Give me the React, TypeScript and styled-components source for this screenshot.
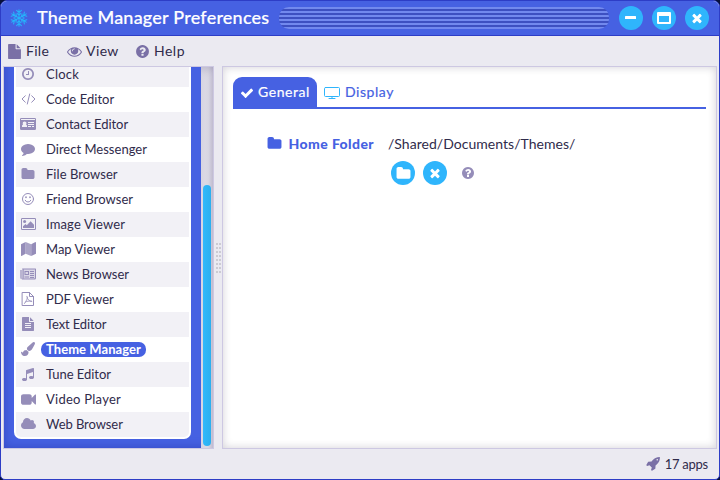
import React from 'react';
import styled, { createGlobalStyle, css } from 'styled-components';

const GlobalStyle = createGlobalStyle`
  * { box-sizing: border-box; }
  html, body { margin: 0; background: #07103a; }
  body { font-family: Lato, "Liberation Sans", sans-serif; color: #302b4b; overflow: hidden; }
`;

/* ---------- layout ---------- */

const Window = styled.div`
  display: flex;
  flex-direction: column;
  width: 720px;
  height: 480px;
  border: 1px solid #2d3dc6;
  border-radius: 7px 7px 5px 5px;
  background: #ebeaf1;
  overflow: hidden;
`;

const TitleBar = styled.header`
  display: flex;
  align-items: center;
  height: 35px;
  flex: none;
  padding: 0 10px 0 8px;
  background: #4661e2;
  border-bottom: 1px solid #2d3dc6;
  color: #fff;
`;

const Title = styled.h1<{ $spacing: number }>`
  margin: 0 9px 0 8px;
  width: 233px;
  flex: none;
  height: 34px;
  font-size: 18px;
  font-weight: 500;
  line-height: 32px;
  letter-spacing: ${(p) => p.$spacing}px;
  white-space: nowrap;
  -webkit-text-stroke: 0.2px #fff;
`;

const Grip = styled.div`
  flex: 1;
  height: 22px;
  border-radius: 10px;
  background: repeating-linear-gradient(#7289ee 0 2px, #3d50c1 2px 4px);
`;

const WindowButtons = styled.div`
  display: flex;
  gap: 9px;
  margin-left: 10px;
`;

const RoundButton = styled.button`
  display: flex;
  align-items: center;
  justify-content: center;
  width: 24px;
  height: 24px;
  padding: 0;
  border: 0;
  border-radius: 50%;
  background: #2fb5fc;
  color: #fff;
`;

const MenuBar = styled.nav`
  display: flex;
  height: 30px;
  flex: none;
  padding: 0 0 0 6px;
`;

const MenuItem = styled.div<{ $width: number; $spacing: number }>`
  display: flex;
  align-items: center;
  gap: 4px;
  width: ${(p) => p.$width}px;
  font-size: 14px;
  letter-spacing: ${(p) => p.$spacing}px;
  line-height: 30px;
  svg { color: #7a70a6; }
`;

const Body = styled.div`
  display: flex;
  height: 383px;
  flex: none;
  margin: 0 2px;
`;

const SidePanel = styled.aside`
  display: flex;
  width: 211px;
  flex: none;
  border: 1px solid #cdc8e2;
`;

const ListWell = styled.div`
  display: flex;
  flex-direction: column;
  justify-content: flex-end;
  width: 197px;
  flex: none;
  padding: 0 10px 9px;
  background: #4661e2;
  box-shadow: inset 5px -5px 9px -4px rgba(30, 40, 150, 0.35);
  overflow: hidden;
`;

const AppList = styled.ul`
  display: flex;
  flex-direction: column;
  flex: none;
  margin: 0;
  padding: 0 2px 2px;
  list-style: none;
  background: #fff;
  border-radius: 0 0 7px 7px;
`;

const AppRow = styled.li<{ $shaded: boolean }>`
  display: flex;
  align-items: center;
  height: 25px;
  background: ${(p) => (p.$shaded ? '#f2f1f6' : '#fff')};
  &:last-child { border-radius: 0 0 5px 5px; }
`;

const AppIcon = styled.span`
  display: flex;
  justify-content: center;
  width: 25px;
  padding: 0 1px 1px 0;
  color: #958db9;
`;

const AppName = styled.span<{ $selected?: boolean; $spacing: number }>`
  height: 15px;
  padding: 0 5px;
  border-radius: 7px;
  font-size: 13px;
  line-height: 15px;
  letter-spacing: ${(p) => p.$spacing}px;
  white-space: nowrap;
  ${(p) => p.$selected && css`
    background: #4661e2;
    color: #fff;
    font-weight: 700;
  `}
`;

const ScrollTrack = styled.div`
  display: flex;
  flex: 1;
  align-items: flex-end;
  justify-content: center;
  padding: 0 0 2px;
  background: linear-gradient(90deg, #dedce7, #d8d6e2 60%, #c5c1d5);
  box-shadow: inset 0 6px 8px -4px rgba(50, 40, 90, 0.2);
`;

const ScrollThumb = styled.div`
  width: 8px;
  height: 261px;
  border-radius: 4px;
  background: linear-gradient(90deg, #30b9fb, #2bafef);
`;

const Splitter = styled.div`
  display: flex;
  align-items: center;
  justify-content: center;
  width: 8px;
  flex: none;
`;

const SplitterDots = styled.div`
  display: grid;
  grid-template-columns: 2px 2px;
  gap: 2px 1px;
`;

const Dot = styled.i`
  width: 2px;
  height: 2px;
  background: #cccbd3;
`;

const Content = styled.main`
  flex: 1;
  padding: 10px 10px 0 10px;
  border: 1px solid #cdc8e2;
  background: #fff;
  box-shadow: inset 0 0 9px rgba(20, 10, 40, 0.19);
`;

const Tabs = styled.div`
  display: flex;
  height: 32px;
  border-bottom: 2px solid #4661e2;
`;

const Tab = styled.div<{ $active?: boolean; $spacing: number }>`
  display: flex;
  align-items: center;
  gap: ${(p) => (p.$active ? 4 : 5)}px;
  height: 30px;
  padding: 0 7px 1px;
  border-radius: 9px 9px 0 0;
  font-size: 14px;
  letter-spacing: ${(p) => p.$spacing}px;
  background: ${(p) => (p.$active ? '#4661e2' : 'transparent')};
  color: ${(p) => (p.$active ? '#fff' : '#4661e2')};
  width: ${(p) => (p.$active ? '84px' : 'auto')};
  -webkit-text-stroke: 0.2px currentColor;
  svg { margin-top: 2px; }
`;

const Form = styled.div`
  display: grid;
  grid-template-columns: 141px 1fr;
  column-gap: 14px;
  padding: 26px 0 0;
`;

const FieldLabel = styled.div`
  display: flex;
  align-items: center;
  justify-content: flex-end;
  gap: 7px;
  height: 17px;
  color: #4661e2;
  font-size: 14px;
  font-weight: 900;
  letter-spacing: 0.4px;
  white-space: nowrap;
`;

const FieldValue = styled.div`
  height: 17px;
  font-size: 14px;
  letter-spacing: 0.03px;
  line-height: 17px;
`;

const FieldActions = styled.div`
  display: flex;
  grid-column: 2;
  align-items: center;
  gap: 8px;
  margin: 9px 0 0 3px;
  color: #958db9;
`;

const HelpMark = styled.span`
  display: flex;
  margin-left: 6px;
`;

const StatusBar = styled.footer`
  display: flex;
  flex: 1;
  align-items: center;
  justify-content: flex-end;
  gap: 4px;
  padding: 0 11px 1px 0;
  font-size: 13px;
  letter-spacing: -0.25px;
  svg { color: #7a70a6; }
`;

/* ---------- icons ---------- */

const Svg = styled.svg`
  display: block;
  flex: none;
  fill: currentColor;
`;

const paths = {
  folder: 'M1728 608v704q0 92-66 158t-158 66h-1216q-92 0-158-66t-66-158v-960q0-92 66-158t158-66h320q92 0 158 66t66 158v32h672q92 0 158 66t66 158z',
  help: 'M1024 1376v-192q0-14-9-23t-23-9h-192q-14 0-23 9t-9 23v192q0 14 9 23t23 9h192q14 0 23-9t9-23zm256-672q0-88-55.5-163t-138.5-116-170-41q-243 0-371 213-15 24 8 42l132 100q7 6 19 6 16 0 25-12 53-68 86-92 34-24 86-24 48 0 85.5 26t37.5 59q0 38-20 61t-68 45q-63 28-115.5 86.5t-52.5 125.5v36q0 14 9 23t23 9h192q14 0 23-9t9-23q0-19 21.5-49.5t54.5-49.5q32-18 49-28.5t46-35 44.5-48 28-60.5 12.5-81zm384 192q0 209-103 385.5t-279.5 279.5-385.5 103-385.5-103-279.5-279.5-103-385.5 103-385.5 279.5-279.5 385.5-103 385.5 103 279.5 279.5 103 385.5z',
  clock: 'M1024 544v448q0 14-9 23t-23 9h-320q-14 0-23-9t-9-23v-64q0-14 9-23t23-9h224v-352q0-14 9-23t23-9h64q14 0 23 9t9 23zm416 352q0-148-73-273t-198-198-273-73-273 73-198 198-73 273 73 273 198 198 273 73 273-73 198-198 73-273zm224 0q0 209-103 385.5t-279.5 279.5-385.5 103-385.5-103-279.5-279.5-103-385.5 103-385.5 279.5-279.5 385.5-103 385.5 103 279.5 279.5 103 385.5z',
  file: 'M1152 512v-472q22 14 36 28l408 408q14 14 28 36h-472zm-128 32q0 40 28 68t68 28h544v1056q0 40-28 68t-68 28h-1344q-40 0-68-28t-28-68v-1600q0-40 28-68t68-28h800v544z',
  text: 'M1596 476q14 14 28 36h-472v-472q22 14 36 28zm-476 164h544v1056q0 40-28 68t-68 28h-1344q-40 0-68-28t-28-68v-1600q0-40 28-68t68-28h800v544q0 40 28 68t68 28zm160 736v-64q0-14-9-23t-23-9h-704q-14 0-23 9t-9 23v64q0 14 9 23t23 9h704q14 0 23-9t9-23zm0-256v-64q0-14-9-23t-23-9h-704q-14 0-23 9t-9 23v64q0 14 9 23t23 9h704q14 0 23-9t9-23zm0-256v-64q0-14-9-23t-23-9h-704q-14 0-23 9t-9 23v64q0 14 9 23t23 9h704q14 0 23-9t9-23z',
  eye: 'M1664 960q-152-236-381-353 61 104 61 225 0 185-131.5 316.5t-316.5 131.5-316.5-131.5-131.5-316.5q0-121 61-225-229 117-381 353 133 205 333.5 326.5t434.5 121.5 434.5-121.5 333.5-326.5zm-720-384q0-20-14-34t-34-14q-125 0-214.5 89.5t-89.5 214.5q0 20 14 34t34 14 34-14 14-34q0-86 61-147t147-61q20 0 34-14t14-34zm848 384q0 34-20 69-140 230-376.5 368.5t-499.5 138.5-499.5-139-376.5-368q-20-35-20-69t20-69q140-229 376.5-368t499.5-139 499.5 139 376.5 368q20 35 20 69z',
  comment: 'M1792 896q0 174-120 321.5t-326 233-450 85.5q-70 0-145-8-198 175-460 242-49 14-114 22-17 2-30.5-9t-17.5-29v-1q-3-4-.5-12t2-10 4.5-9.5l6-9 7-8.5 8-9q7-8 31-34.5t34.5-38 31-39.5 32.5-51 27-59 26-76q-157-89-247.5-220t-90.5-281q0-130 71-248.5t191-204.5 286-136.5 348-50.5q244 0 450 85.5t326 233 120 321.5z',
  close: 'M1490 1322q0 40-28 68l-136 136q-28 28-68 28t-68-28l-294-294-294 294q-28 28-68 28t-68-28l-136-136q-28-28-28-68t28-68l294-294-294-294q-28-28-28-68t28-68l136-136q28-28 68-28t68 28l294 294 294-294q28-28 68-28t68 28l136 136q28 28 28 68t-28 68l-294 294 294 294q28 28 28 68z',
  check: 'M1671 566q0 40-28 68l-724 724-136 136q-28 28-68 28t-68-28l-136-136-362-362q-28-28-28-68t28-68l136-136q28-28 68-28t68 28l294 295 656-657q28-28 68-28t68 28l136 136q28 28 28 68z',
  video: 'M1792 352v1088q0 42-39 59-13 5-25 5-27 0-45-19l-403-403v166q0 119-84.5 203.5t-203.5 84.5h-704q-119 0-203.5-84.5t-84.5-203.5v-704q0-119 84.5-203.5t203.5-84.5h704q119 0 203.5 84.5t84.5 203.5v165l403-402q18-19 45-19 12 0 25 5 39 17 39 59z',
  music: 'M1664 224v1120q0 50-34 89t-86 60.5-103.5 32-96.5 10.5-96.5-10.5-103.5-32-86-60.5-34-89 34-89 86-60.5 103.5-32 96.5-10.5q105 0 192 39v-537l-768 237v709q0 50-34 89t-86 60.5-103.5 32-96.5 10.5-96.5-10.5-103.5-32-86-60.5-34-89 34-89 86-60.5 103.5-32 96.5-10.5q105 0 192 39v-967q0-31 19-56.5t49-35.5l832-256q12-4 28-4 40 0 68 28t28 68z',
  cloud: 'M1920 1152q0 159-112.5 271.5t-271.5 112.5h-1088q-185 0-316.5-131.5t-131.5-316.5q0-132 71-241.5t187-163.5q-2-28-2-43 0-212 150-362t362-150q158 0 286.5 88t187.5 230q70-62 166-62 106 0 181 75t75 181q0 75-41 138 129 30 213 134.5t84 239.5z',
  brush: 'M1615 0q70 0 122.5 46.5t52.5 116.5q0 63-45 151-332 629-465 752-97 91-218 91-126 0-216.5-92.5t-90.5-219.5q0-128 92-212l638-579q59-54 130-54zm-909 1034q39 76 106.5 130t150.5 76l1 71q4 213-129.5 347t-348.5 134q-123 0-218-46.5t-152.5-127.5-86.5-183-29-220q7 5 41 30t62 44.5 59 36.5 46 17q41 0 55-37 25-66 57.5-112.5t69.5-76 88-47.5 103-25.5 125-10.5z',
  rocket: 'M1440 448q0-40-28-68t-68-28-68 28-28 68 28 68 68 28 68-28 28-68zm224-288q0 249-75.5 430.5t-253.5 360.5q-81 80-195 176l-20 379q-2 16-16 26l-384 224q-7 4-16 4-12 0-23-9l-64-64q-13-14-8-32l85-276-281-281-276 85q-3 1-9 1-14 0-23-9l-64-64q-17-19-5-39l224-384q10-14 26-16l379-20q96-114 176-195 188-187 358-258t431-71q14 0 24 9.5t10 22.5z',
};

const Glyph = ({ name, size = 14 }: { name: keyof typeof paths; size?: number }) => {
  const w = name === 'cloud' ? 1920 : 1792;
  return (
    <Svg width={(size * w) / 1792} height={size} viewBox={`0 0 ${w} 1792`}>
      <path d={paths[name]} />
    </Svg>
  );
};

const Line = styled(Svg)`
  fill: none;
  stroke: currentColor;
  stroke-linejoin: round;
  stroke-linecap: round;
`;

const Snowflake = () => (
  <Line width="20" height="20" viewBox="-10 -10 20 20" color="#25b4fb">
    {[0, 60, 120, 180, 240, 300].map((a) => (
      <path key={a} transform={`rotate(${a})`} strokeWidth="1.05" d="M0 0V-8.3M-2.4-7.6L0-5.3L2.4-7.6M-1.9-4.6L0-2.8L1.9-4.6" />
    ))}
  </Line>
);

const Minimize = () => (
  <Svg width="12" height="12" viewBox="0 0 12 12"><rect y="4" width="11" height="3" rx=".6" /></Svg>
);

const Maximize = () => (
  <Svg width="14" height="12" viewBox="0 0 14 12">
    <path fillRule="evenodd" d="M1 0H13Q14 0 14 1V11Q14 12 13 12H1Q0 12 0 11V1Q0 0 1 0ZM2 4V10H12V4Z" />
  </Svg>
);

const Code = () => (
  <Line width="15" height="14" viewBox="0 0 15 14">
    <path d="M4.3 3.8L1 7L4.3 10.2M10.7 3.8L14 7L10.7 10.2M8.7 2L6.3 12" />
  </Line>
);

const Card = () => (
  <Svg width="16" height="14" viewBox="0 0 16 14">
    <path fillRule="evenodd" d="M1.2 1H14.8Q16 1 16 2.2V11.8Q16 13 14.8 13H1.2Q0 13 0 11.8V2.2Q0 1 1.2 1ZM1 2V3H15V2ZM2 10H7V9Q7 7.6 6 7.4Q6.5 6.8 6.5 6Q6.5 4.5 4.5 4.5Q2.7 4.5 2.7 6Q2.7 6.8 3.1 7.4Q2 7.6 2 9ZM8 5V6H14V5ZM8 7V8H14V7ZM8 9V10H11V9ZM12 9V10H14V9Z" />
  </Svg>
);

const Smile = () => (
  <Line width="14" height="14" viewBox="0 0 14 14">
    <circle cx="7" cy="7" r="5.5" />
    <path d="M4.2 8.3Q4.9 10 7 10T9.8 8.3" />
    <path strokeWidth="1.7" d="M5 5.2V5.3M9 5.2V5.3" />
  </Line>
);

const Picture = () => (
  <Svg width="15" height="14" viewBox="0 0 15 14">
    <path fillRule="evenodd" d="M1.2 1H13.8Q15 1 15 2.2V11.8Q15 13 13.8 13H1.2Q0 13 0 11.8V2.2Q0 1 1.2 1ZM1 2V12H14V2Z" />
    <circle cx="3.6" cy="4.6" r="1.5" />
    <path d="M2 11V9.3L4.5 6.9L5.8 8.2L9.6 4.3L13 7.7V11Z" />
  </Svg>
);

const MapIcon = () => (
  <Svg width="15" height="14" viewBox="0 0 15 14">
    <path d="M0 2.2L4.6 0V11.8L.5 14Q0 14 0 13.5Z" />
    <path opacity=".8" d="M4.6 0L10.2 2.2V14L4.6 11.8Z" />
    <path d="M10.2 2.2L14.4 0Q15 0 15 .5V11.8L10.2 14Z" />
  </Svg>
);

const News = () => (
  <Svg width="16" height="14" viewBox="0 0 16 14">
    <path opacity=".6" d="M0 3H2V1.6H3V12H1.5Q0 12 0 10.5Z" />
    <path opacity=".25" d="M3.5 2H15.5V12H3.5Z" />
    <path fillRule="evenodd" d="M2.5 1.5H15.4Q16 1.5 16 2V11Q16 12.5 14.5 12.5H1.5Q3 12 3 10.5V2ZM3.7 2.5V10.5Q3.7 11.2 3.4 11.5H14.3Q15 11.5 15 10.7V2.5Z" />
    <path fillRule="evenodd" d="M4.5 4H9V8H4.5ZM5.5 5V7H8V5ZM10 4H14V5H10ZM10 6H14V7H10ZM10 8H14V9H10ZM4.5 9.5H9V10.5H4.5ZM10 10H14V11H10Z" />
  </Svg>
);

const Pdf = () => (
  <Line width="14" height="14" viewBox="0 0 14 14">
    <path d="M1.5 .5H8.5L12.5 4.5V13.5H1.5ZM8.5 .5V4.5H12.5" />
    <path strokeWidth=".8" d="M6 4.5C7.1 4.8 6.2 8 3.4 11.6M6.1 4.8C6 7 8 9.4 10.8 9.6M4.3 10C5.7 9.3 8 8.9 10.4 9" />
  </Line>
);

const Monitor = () => (
  <Line width="16" height="14" viewBox="0 0 16 14" color="#2fb5fc">
    <path d="M1.5 1.5H14.5Q15.5 1.5 15.5 2.5V9.5Q15.5 10.5 14.5 10.5H1.5Q.5 10.5 .5 9.5V2.5Q.5 1.5 1.5 1.5ZM8 10.8V12.5M5 12.5H11" />
  </Line>
);

/* ---------- page ---------- */

const apps: { name: string; spacing: number; icon: React.ReactNode; selected?: boolean }[] = [
  { name: 'Clock', spacing: 0.25, icon: <Glyph name="clock" /> },
  { name: 'Code Editor', spacing: 0.05, icon: <Code /> },
  { name: 'Contact Editor', spacing: -0.05, icon: <Card /> },
  { name: 'Direct Messenger', spacing: 0.01, icon: <Glyph name="comment" /> },
  { name: 'File Browser', spacing: 0.04, icon: <Glyph name="folder" /> },
  { name: 'Friend Browser', spacing: 0.02, icon: <Smile /> },
  { name: 'Image Viewer', spacing: 0.14, icon: <Picture /> },
  { name: 'Map Viewer', spacing: 0, icon: <MapIcon /> },
  { name: 'News Browser', spacing: 0, icon: <News /> },
  { name: 'PDF Viewer', spacing: -0.04, icon: <Pdf /> },
  { name: 'Text Editor', spacing: -0.12, icon: <Glyph name="text" /> },
  { name: 'Theme Manager', spacing: 0.07, icon: <Glyph name="brush" />, selected: true },
  { name: 'Tune Editor', spacing: -0.04, icon: <Glyph name="music" /> },
  { name: 'Video Player', spacing: 0.25, icon: <Glyph name="video" size={15} /> },
  { name: 'Web Browser', spacing: -0.07, icon: <Glyph name="cloud" /> },
];

export default function App() {
  return (
    <>
      <GlobalStyle />
      <Window>
        <TitleBar>
          <Snowflake />
          <Title $spacing={0.22}>Theme Manager Preferences</Title>
          <Grip />
          <WindowButtons>
            <RoundButton aria-label="Minimize"><Minimize /></RoundButton>
            <RoundButton aria-label="Maximize"><Maximize /></RoundButton>
            <RoundButton aria-label="Close"><Glyph name="close" /></RoundButton>
          </WindowButtons>
        </TitleBar>
        <MenuBar>
          <MenuItem $width={60} $spacing={0.3}><Glyph name="file" size={15} />File</MenuItem>
          <MenuItem $width={68} $spacing={0.4}><Glyph name="eye" size={15} />View</MenuItem>
          <MenuItem $width={60} $spacing={0.5}><Glyph name="help" size={15} />Help</MenuItem>
        </MenuBar>
        <Body>
          <SidePanel>
            <ListWell>
              <AppList>
                {apps.map((app, i) => (
                  <AppRow key={app.name} $shaded={i % 2 === 0}>
                    <AppIcon>{app.icon}</AppIcon>
                    <AppName $selected={app.selected} $spacing={app.spacing}>{app.name}</AppName>
                  </AppRow>
                ))}
              </AppList>
            </ListWell>
            <ScrollTrack><ScrollThumb /></ScrollTrack>
          </SidePanel>
          <Splitter>
            <SplitterDots>
              {Array.from({ length: 16 }, (_, i) => <Dot key={i} />)}
            </SplitterDots>
          </Splitter>
          <Content>
            <Tabs>
              <Tab $active $spacing={0.55}><Glyph name="check" />General</Tab>
              <Tab $spacing={0.55}><Monitor />Display</Tab>
            </Tabs>
            <Form>
              <FieldLabel><Glyph name="folder" size={15} />Home Folder</FieldLabel>
              <FieldValue>/Shared/Documents/Themes/</FieldValue>
              <FieldActions>
                <RoundButton aria-label="Choose folder"><Glyph name="folder" size={15} /></RoundButton>
                <RoundButton aria-label="Clear folder"><Glyph name="close" /></RoundButton>
                <HelpMark><Glyph name="help" size={14} /></HelpMark>
              </FieldActions>
            </Form>
          </Content>
        </Body>
        <StatusBar><Glyph name="rocket" size={15} />17 apps</StatusBar>
      </Window>
    </>
  );
}
